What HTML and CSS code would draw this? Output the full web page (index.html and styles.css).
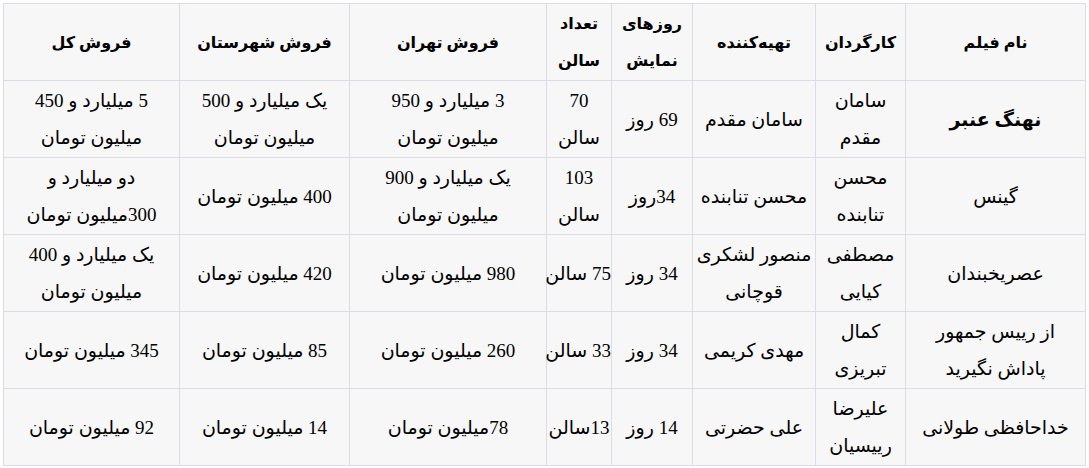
FILE: index.html
```html
<!DOCTYPE html>
<html lang="fa" dir="rtl">
<head>
<meta charset="utf-8">
<title>فروش فیلم‌ها</title>
<link rel="stylesheet" href="styles.css">
</head>
<body>
<table class="sales">
  <colgroup>
    <col class="c-name">
    <col class="c-dir">
    <col class="c-prod">
    <col class="c-days">
    <col class="c-halls">
    <col class="c-teh">
    <col class="c-city">
    <col class="c-total">
  </colgroup>
  <thead>
    <tr>
      <th>نام فیلم</th>
      <th>کارگردان</th>
      <th>تهیه‌کننده</th>
      <th>روزهای<br>نمایش</th>
      <th>تعداد<br>سالن</th>
      <th>فروش تهران</th>
      <th>فروش شهرستان</th>
      <th>فروش کل</th>
    </tr>
  </thead>
  <tbody>
    <tr>
      <td class="bold">نهنگ عنبر</td>
      <td>سامان<br>مقدم</td>
      <td>سامان مقدم</td>
      <td>69 روز</td>
      <td>70<br>سالن</td>
      <td>3 میلیارد و 950<br>میلیون تومان</td>
      <td>یک میلیارد و 500<br>میلیون تومان</td>
      <td>5 میلیارد و 450<br>میلیون تومان</td>
    </tr>
    <tr>
      <td>گینس</td>
      <td>محسن<br>تنابنده</td>
      <td>محسن تنابنده</td>
      <td>34روز</td>
      <td>103<br>سالن</td>
      <td>یک میلیارد و 900<br>میلیون تومان</td>
      <td>400 میلیون تومان</td>
      <td>دو میلیارد و<br>300میلیون تومان</td>
    </tr>
    <tr>
      <td>عصریخبندان</td>
      <td>مصطفی<br>کیایی</td>
      <td>منصور لشکری<br>قوچانی</td>
      <td>34 روز</td>
      <td class="nowrap">75 سالن</td>
      <td>980 میلیون تومان</td>
      <td>420 میلیون تومان</td>
      <td>یک میلیارد و 400<br>میلیون تومان</td>
    </tr>
    <tr>
      <td>از رییس جمهور<br>پاداش نگیرید</td>
      <td>کمال<br>تبریزی</td>
      <td>مهدی کریمی</td>
      <td>34 روز</td>
      <td class="nowrap">33 سالن</td>
      <td>260 میلیون تومان</td>
      <td>85 میلیون تومان</td>
      <td>345 میلیون تومان</td>
    </tr>
    <tr>
      <td>خداحافظی طولانی</td>
      <td>علیرضا<br>رییسیان</td>
      <td>علی حضرتی</td>
      <td>14 روز</td>
      <td class="nowrap">13سالن</td>
      <td>78میلیون تومان</td>
      <td>14 میلیون تومان</td>
      <td>92 میلیون تومان</td>
    </tr>
  </tbody>
</table>
</body>
</html>
```
FILE: styles.css
```css
html, body {
  margin: 0;
  padding: 0;
  background: #ffffff;
}
body {
  padding: 3px 3px 0 4px;
  font-family: "Liberation Serif", "DejaVu Sans", serif;
  font-size: 16px;
  color: #000;
}
.sales {
  width: 1083px;
  table-layout: fixed;
  border-collapse: collapse;
  background: #f7f7f7;
}
.sales th, .sales td {
  border: 1px solid #dcdce6;
  padding: 1px 1px;
  line-height: 37px;
  text-align: center;
  vertical-align: middle;
  font-weight: normal;
  height: 74px;
  box-sizing: content-box;
}
.sales th {
  font-size: 16px;
  font-weight: bold;
}
.sales td {
  font-size: 19px;
}
.sales td.bold {
  font-weight: bold;
}
.sales td.nowrap {
  white-space: nowrap;
  padding: 1px 0;
}
.c-name { width: 180px; }
.c-dir { width: 90px; }
.c-prod { width: 123px; }
.c-days { width: 81px; }
.c-halls { width: 65px; }
.c-teh { width: 197px; }
.c-city { width: 170px; }
.c-total { width: 176px; }
```
